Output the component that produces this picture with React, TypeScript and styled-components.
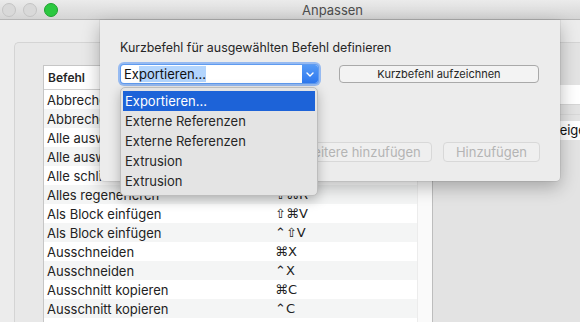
import styled, { createGlobalStyle } from 'styled-components';

const GlobalStyle = createGlobalStyle`
  html, body {
    margin: 0;
    padding: 0;
  }
  body {
    width: 580px;
    height: 322px;
    overflow: hidden;
    font-family: Inter, "Liberation Sans", "DejaVu Sans", sans-serif;
    -webkit-font-smoothing: antialiased;
  }
`;

const Window = styled.div`
  position: relative;
  width: 580px;
  height: 322px;
  background: #ececec;
  overflow: hidden;
  display: flex;
  flex-direction: column;
`;

const TitleBar = styled.div`
  height: 20px;
  flex: none;
  box-sizing: border-box;
  display: flex;
  align-items: center;
  padding-left: 2px;
  background: linear-gradient(#ebebeb, #d5d5d5);
  border-bottom: 1px solid #b6b6b6;
`;

const Lights = styled.div`
  display: flex;
  gap: 7px;
`;

const Light = styled.span<{ $color?: string; $edge?: string }>`
  width: 12px;
  height: 12px;
  border-radius: 50%;
  background: ${(p) => p.$color || '#d9d9d9'};
  border: 0.5px solid ${(p) => p.$edge || '#c4c4c4'};
`;

const Title = styled.div`
  margin-left: 244px;
  font-size: 13px;
  color: #4d4d4d;
`;

const Body = styled.div`
  flex: 1;
  display: flex;
  padding: 22px 0 0 14px;
`;

const GroupBox = styled.div`
  flex: 1;
  display: flex;
  margin-right: -20px;
  background: #e8e8e8;
  border: 1px solid #d4d4d4;
  border-right: none;
  border-bottom: none;
  border-top-left-radius: 5px;
`;

const TablePane = styled.div`
  width: 390px;
  flex: none;
  display: flex;
  margin: 22px 0 0 28px;
  background: #fff;
  border-left: 1px solid #c6c6c6;
  border-top: 1px solid #c6c6c6;
  border-right: 1px solid #bdbdbd;
  box-sizing: border-box;
`;

const Table = styled.div`
  flex: 1;
  display: grid;
  grid-template-columns: 231px 1fr;
  grid-template-rows: 24px;
  grid-auto-rows: 19px;
  align-content: start;
`;

const HeaderCell = styled.div`
  grid-column: 1 / -1;
  display: flex;
  align-items: center;
  box-sizing: border-box;
  border-bottom: 1px solid #d0d0d0;
  font-size: 12px;
  font-weight: 600;
  color: #262626;
  padding-left: 4px;
`;

const Cell = styled.div<{ $alt: boolean }>`
  display: flex;
  align-items: center;
  padding-left: 3px;
  background: ${(p) => (p.$alt ? '#f4f5f5' : '#fff')};
  font-size: 13px;
  color: #222;
  white-space: nowrap;
  overflow: hidden;
`;

const Keys = styled(Cell)`
  padding-left: 0;
  font-family: "DejaVu Sans", sans-serif;
`;

const Scroller = styled.div`
  width: 14px;
  flex: none;
  background: #fafafa;
  border-left: 1px solid #ececec;
`;

const RightPane = styled.div`
  flex: 1;
  display: flex;
  flex-direction: column;
  padding: 42px 0 0 100px;
  background: #e3e3e3;
`;

const Field = styled.div`
  height: 19px;
  background: #fff;
  border-bottom: 1px solid #d6d6d6;
`;

const Divider = styled.div`
  height: 1px;
  margin-top: 9px;
  background: #d8d8d8;
`;

const Popup = styled.div`
  height: 19px;
  margin-top: 6px;
  background: #fff;
  font-size: 13px;
  line-height: 19px;
  padding-left: 3px;
  color: #111;
  white-space: nowrap;
`;

const Sheet = styled.div`
  position: absolute;
  top: 20px;
  left: 100px;
  width: 460px;
  height: 161px;
  box-sizing: border-box;
  padding: 20px 20px 0;
  display: flex;
  flex-direction: column;
  background: #ececec;
  border-radius: 0 0 4px 4px;
  box-shadow: 0 6px 18px rgba(0, 0, 0, 0.28), 0 0 0 0.5px rgba(0, 0, 0, 0.12);
`;

const Label = styled.div`
  font-size: 12.4px;
  line-height: 16px;
  color: #262626;
`;

const ComboRow = styled.div`
  display: flex;
  align-items: center;
  gap: 21px;
  margin-top: 9px;
  padding-left: 1px;
`;

const Combo = styled.div`
  position: relative;
  width: 197px;
  height: 18px;
  display: flex;
  background: #fff;
  border-radius: 3px;
  box-shadow: 0 0 0 1px #5f9bf0, 0 0 0 3px rgba(122, 170, 243, 0.75);
`;

const ComboText = styled.div`
  flex: 1;
  font-size: 13px;
  line-height: 18px;
  padding-left: 3px;
  color: #111;
  white-space: nowrap;
`;

const Selection = styled.span`
  background: #b3d5fd;
`;

const ComboButton = styled.div`
  width: 16px;
  display: flex;
  align-items: center;
  justify-content: center;
  background: linear-gradient(#559af6, #2e78ef);
  border-radius: 0 3px 3px 0;
`;

const Menu = styled.div`
  position: absolute;
  top: 22px;
  left: -1px;
  width: 198px;
  box-sizing: border-box;
  padding: 3px 2px 4px;
  background: #e4e4e4;
  border: 0.5px solid #bdbdbd;
  border-radius: 5px;
  box-shadow: 0 4px 12px rgba(0, 0, 0, 0.25);
  z-index: 2;
`;

const MenuItem = styled.div<{ $active?: boolean }>`
  height: 20px;
  line-height: 20px;
  padding-left: 2px;
  font-size: 13px;
  color: ${(p) => (p.$active ? '#fff' : '#262626')};
  background: ${(p) => (p.$active ? '#1d63d8' : 'transparent')};
`;

const PushButton = styled.div<{ $width: number; $disabled?: boolean }>`
  width: ${(p) => p.$width}px;
  height: ${(p) => (p.$disabled ? 20 : 18)}px;
  box-sizing: border-box;
  display: flex;
  align-items: center;
  justify-content: center;
  font-size: ${(p) => (p.$disabled ? 13 : 11)}px;
  color: ${(p) => (p.$disabled ? '#b4b4b4' : '#262626')};
  background: ${(p) => (p.$disabled ? '#efefef' : '#f3f3f3')};
  border: 1px solid ${(p) => (p.$disabled ? '#d8d8d8' : '#a9a9a9')};
  border-radius: 4px;
  white-space: nowrap;
`;

const ButtonRow = styled.div`
  display: flex;
  justify-content: flex-end;
  gap: 11px;
  margin-top: 59px;
`;

const rows: [string, string][] = [
  ['Abbrechen', '⌘.'],
  ['Abbrechen', 'Esc'],
  ['Alle auswählen', '⌘A'],
  ['Alle auswählen', '⌃A'],
  ['Alle schließen', '⇧⌘W'],
  ['Alles regenerieren', '⇧⌘R'],
  ['Als Block einfügen', '⇧⌘V'],
  ['Als Block einfügen', '⌃⇧V'],
  ['Ausschneiden', '⌘X'],
  ['Ausschneiden', '⌃X'],
  ['Ausschnitt kopieren', '⌘C'],
  ['Ausschnitt kopieren', '⌃C'],
  ['Auswahl aufheben', ''],
];

const options = [
  'Exportieren...',
  'Externe Referenzen',
  'Externe Referenzen',
  'Extrusion',
  'Extrusion',
];

export default function App() {
  return (
    <>
      <GlobalStyle />
      <Window>
        <TitleBar>
          <Lights>
            <Light />
            <Light />
            <Light $color="#2bc840" $edge="#1ea22f" />
          </Lights>
          <Title>Anpassen</Title>
        </TitleBar>
        <Body>
          <GroupBox>
            <TablePane>
              <Table>
                <HeaderCell>Befehl</HeaderCell>
                {rows.map(([name, keys], i) => (
                  <>
                    <Cell key={`n${i}`} $alt={i % 2 === 1}>{name}</Cell>
                    <Keys key={`k${i}`} $alt={i % 2 === 1}>{keys}</Keys>
                  </>
                ))}
              </Table>
              <Scroller />
            </TablePane>
            <RightPane>
              <Field />
              <Divider />
              <Popup>Anzeigen</Popup>
            </RightPane>
          </GroupBox>
        </Body>

        <Sheet>
          <Label>Kurzbefehl für ausgewählten Befehl definieren</Label>
          <ComboRow>
            <Combo>
              <ComboText>
                Ex<Selection>portieren...</Selection>
              </ComboText>
              <ComboButton>
                <svg width="8" height="5" viewBox="0 0 8 5">
                  <polyline points="1,1 4,4 7,1" fill="none" stroke="#fff" strokeWidth="1.4" strokeLinecap="round" strokeLinejoin="round" />
                </svg>
              </ComboButton>
              <Menu>
                {options.map((o, i) => (
                  <MenuItem key={i} $active={i === 0}>{o}</MenuItem>
                ))}
              </Menu>
            </Combo>
            <PushButton $width={200}>Kurzbefehl aufzeichnen</PushButton>
          </ComboRow>
          <ButtonRow>
            <PushButton $width={142} $disabled>Weitere hinzufügen</PushButton>
            <PushButton $width={97} $disabled>Hinzufügen</PushButton>
          </ButtonRow>
        </Sheet>
      </Window>
    </>
  );
}
